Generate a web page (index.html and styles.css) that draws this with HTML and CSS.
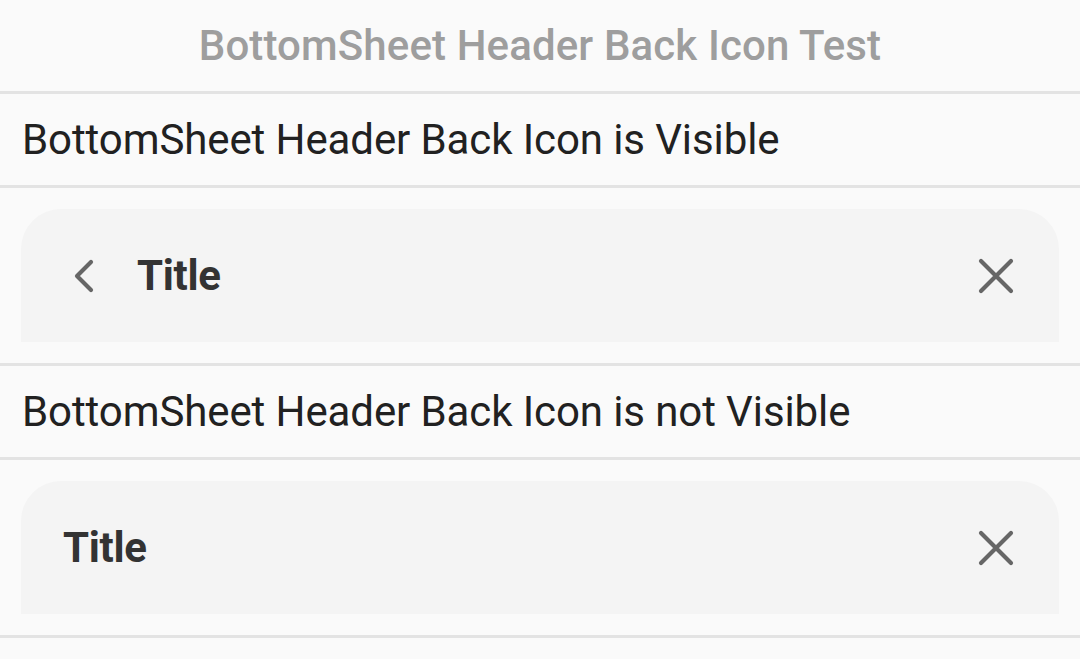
FILE: index.html
```html
<!DOCTYPE html>
<html>
<head>
<meta charset="utf-8">
<link rel="stylesheet" href="styles.css">
</head>
<body>
<div class="page">
  <header class="appbar">BottomSheet Header Back Icon Test</header>
  <div class="row">BottomSheet Header Back Icon is Visible</div>
  <section class="sheet-wrap">
    <div class="sheet">
      <svg class="back" width="54" height="42" viewBox="0 0 54 42">
        <polyline points="28,7 14,21 28,35" fill="none" stroke="#666666" stroke-width="4.2" stroke-linecap="round" stroke-linejoin="round"/>
      </svg>
      <span class="title">Title</span>
      <svg class="close" width="42" height="42" viewBox="0 0 42 42">
        <path d="M6 6 L36 36 M36 6 L6 36" fill="none" stroke="#666666" stroke-width="4.2" stroke-linecap="round"/>
      </svg>
    </div>
  </section>
  <div class="row">BottomSheet Header Back Icon is not Visible</div>
  <section class="sheet-wrap">
    <div class="sheet">
      <span class="title">Title</span>
      <svg class="close" width="42" height="42" viewBox="0 0 42 42">
        <path d="M6 6 L36 36 M36 6 L6 36" fill="none" stroke="#666666" stroke-width="4.2" stroke-linecap="round"/>
      </svg>
    </div>
  </section>
</div>
</body>
</html>
```
FILE: styles.css
```css
html, body {
  margin: 0;
  padding: 0;
  background: #fafafa;
}
body {
  font-family: Roboto, "Liberation Sans", sans-serif;
  width: 1080px;
  height: 659px;
  overflow: hidden;
}
.page {
  display: flex;
  flex-direction: column;
}
.appbar {
  height: 91px;
  display: flex;
  align-items: center;
  justify-content: center;
  font-size: 42px;
  font-weight: 500;
  letter-spacing: 0.12px;
  color: #9e9e9e;
  border-bottom: 3px solid #e3e3e3;
}
.row {
  height: 91px;
  display: flex;
  align-items: center;
  padding-left: 22px;
  font-size: 42px;
  letter-spacing: -0.1px;
  color: #212121;
  border-bottom: 3px solid #e3e3e3;
}
.sheet-wrap {
  padding: 21px 21px;
  border-bottom: 3px solid #e3e3e3;
}
.sheet {
  height: 133px;
  background: #f4f4f4;
  border-radius: 40px 40px 0 0;
  display: flex;
  align-items: center;
  padding: 0 42px;
}
.back {
  display: block;
  margin-right: 20px;
}
.title {
  font-size: 42px;
  font-weight: 700;
  letter-spacing: -0.3px;
  color: #333333;
  flex: 1;
}
.close {
  display: block;
}
```
